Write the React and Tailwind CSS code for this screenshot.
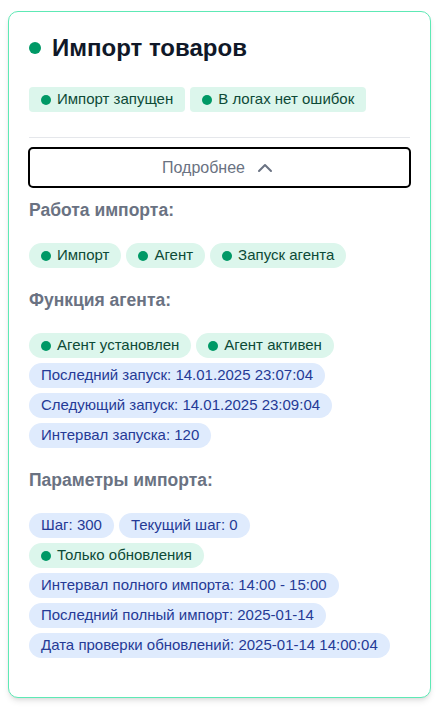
import React from 'react';
import { ChevronUp } from 'lucide-react';

const Dot = () => <span className="w-[10px] h-[10px] rounded-full bg-emerald-600 shrink-0" />;

const GreenBadge = ({ children, square = false }) => (
  <span
    className={`h-[25px] inline-flex items-center gap-[6px] px-3 text-[15px] bg-[#dcf6ec] text-[#0d4a37] ${
      square ? 'rounded' : 'rounded-full'
    }`}
  >
    <Dot />
    {children}
  </span>
);

const BlueBadge = ({ children }) => (
  <span className="h-[25px] inline-flex items-center px-3 text-[15px] rounded-full bg-[#dfebfd] text-[#253a96]">
    {children}
  </span>
);

const Section = ({ title, children, first = false }) => (
  <div className={first ? 'mt-2' : 'mt-[18px]'}>
    <h3 className="text-[17.5px] leading-7 font-bold text-gray-500">{title}</h3>
    <div className="mt-[19px] flex flex-wrap gap-[5px]">{children}</div>
  </div>
);

export default function App() {
  return (
    <div
      className="w-[442px] min-h-[712px] bg-white pt-[11px] pl-2"
      style={{ fontFamily: '"Liberation Sans", Arial, sans-serif' }}
    >
      <div className="w-[423px] rounded-[10px] border border-emerald-300 bg-white shadow-md px-5 pt-5 pb-[39px]">
        <div className="flex items-center gap-[11px] h-8">
          <span className="w-3 h-3 rounded-full bg-emerald-600" />
          <h1 className="text-[24px] leading-8 font-bold text-gray-900">Импорт товаров</h1>
        </div>

        <div className="mt-[23px] flex flex-wrap gap-[5px]">
          <GreenBadge square>Импорт запущен</GreenBadge>
          <GreenBadge square>В логах нет ошибок</GreenBadge>
        </div>

        <div className="mt-[25px] border-t border-gray-200" />

        <button className="mt-[9px] -mx-px w-[calc(100%+2px)] h-[41px] border-2 border-black rounded-[5px] flex items-center justify-center gap-2 text-[16px] text-gray-500">
          Подробнее
          <ChevronUp className="w-6 h-6" strokeWidth={2} />
        </button>

        <Section title="Работа импорта:" first>
          <GreenBadge>Импорт</GreenBadge>
          <GreenBadge>Агент</GreenBadge>
          <GreenBadge>Запуск агента</GreenBadge>
        </Section>

        <Section title="Функция агента:">
          <GreenBadge>Агент установлен</GreenBadge>
          <GreenBadge>Агент активен</GreenBadge>
          <BlueBadge>Последний запуск: 14.01.2025 23:07:04</BlueBadge>
          <BlueBadge>Следующий запуск: 14.01.2025 23:09:04</BlueBadge>
          <BlueBadge>Интервал запуска: 120</BlueBadge>
        </Section>

        <Section title="Параметры импорта:">
          <BlueBadge>Шаг: 300</BlueBadge>
          <BlueBadge>Текущий шаг: 0</BlueBadge>
          <GreenBadge>Только обновления</GreenBadge>
          <BlueBadge>Интервал полного импорта: 14:00 - 15:00</BlueBadge>
          <BlueBadge>Последний полный импорт: 2025-01-14</BlueBadge>
          <BlueBadge>Дата проверки обновлений: 2025-01-14 14:00:04</BlueBadge>
        </Section>
      </div>
    </div>
  );
}
